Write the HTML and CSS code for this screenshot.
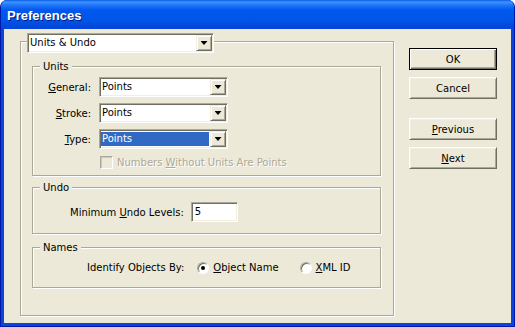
FILE: index.html
```html
<!DOCTYPE html>
<html lang="en">
<head>
    <meta charset="UTF-8">
    <title>Preferences</title>
    <link rel="stylesheet" href="styles.css">
</head>
<body>
    <div class="window">
        <div class="titlebar">
            <span class="title">Preferences</span>
        </div>

        <div class="client">
            <div class="panel">
                <div class="panel-head">
                    <div class="combo wide">
                        <span class="field">Units &amp; Undo</span>
                        <span class="drop"></span>
                    </div>
                </div>

                <div class="group units">
                    <div class="caption">Units</div>

                    <div class="row">
                        <span class="lbl"><u>G</u>eneral:</span>
                        <div class="combo">
                            <span class="field">Points</span>
                            <span class="drop"></span>
                        </div>
                    </div>

                    <div class="row">
                        <span class="lbl"><u>S</u>troke:</span>
                        <div class="combo">
                            <span class="field">Points</span>
                            <span class="drop"></span>
                        </div>
                    </div>

                    <div class="row">
                        <span class="lbl"><u>T</u>ype:</span>
                        <div class="combo">
                            <span class="field selected">Points</span>
                            <span class="drop"></span>
                        </div>
                    </div>

                    <div class="check-row">
                        <span class="checkbox"></span>
                        <span class="disabled">Numbers <u>W</u>ithout Units Are Points</span>
                    </div>
                </div>

                <div class="group undo">
                    <div class="caption">Undo</div>
                    <div class="undo-row">
                        <span>Minimum <u>U</u>ndo Levels:</span>
                        <span class="textbox">5</span>
                    </div>
                </div>

                <div class="group names">
                    <div class="caption">Names</div>
                    <div class="names-row">
                        <span class="names-lbl">Identify Objects By:</span>
                        <span class="radio checked"></span>
                        <span class="radio-text"><u>O</u>bject Name</span>
                        <span class="radio second"></span>
                        <span class="radio-text"><u>X</u>ML ID</span>
                    </div>
                </div>
            </div>

            <div class="buttons">
                <button class="btn default">OK</button>
                <button class="btn">Cancel</button>
                <button class="btn spaced"><u>P</u>revious</button>
                <button class="btn"><u>N</u>ext</button>
            </div>
        </div>
    </div>
</body>
</html>
```

FILE: styles.css
```css
html, body{
    margin: 0;
    padding: 0;
    background: #ffffff;
}

body{
    font-family: "DejaVu Sans", sans-serif;
    font-size: 10px;
    color: #000000;
}

.window{
    width: 515px;
    height: 327px;
    box-sizing: border-box;
    display: flex;
    flex-direction: column;
    background: #0846DA;
    border: 1px solid #0019A8;
    border-top: none;
    border-radius: 7px 7px 0 0;
    overflow: hidden;
}

.titlebar{
    height: 29px;
    flex: none;
    display: flex;
    align-items: center;
    padding: 2px 0 0 6px;
    box-sizing: border-box;
    background: linear-gradient(to bottom, #0A5AE8 0px, #3D95FF 2px, #2277F8 5px, #0058EE 10px, #0055E8 20px, #0049DA 26px, #0843DA 29px);
}

.title{
    font-family: "Liberation Sans", sans-serif;
    font-size: 13px;
    font-weight: bold;
    color: #ffffff;
    text-shadow: 1px 1px 0 #0A1883;
}

.client{
    flex: 1;
    margin: 0 3px 3px 3px;
    background: #ECE9D8;
    display: flex;
    align-items: flex-start;
    padding: 12px 0 0 16px;
}

.panel{
    width: 374px;
    box-sizing: border-box;
    border: 1px solid #ACA899;
    box-shadow: inset 1px 1px 0 #ffffff, 1px 1px 0 #ffffff;
    padding: 0 12px 27px 11px;
}

.panel-head{
    margin: -9px 0 0 -5px;
}

.combo{
    width: 129px;
    height: 20px;
    box-sizing: border-box;
    display: flex;
    border: 1px solid;
    border-color: #ACA899 #ffffff #ffffff #ACA899;
    box-shadow: inset 1px 1px 0 #716F64, inset -1px -1px 0 #F1EFE2;
    padding: 1px;
    background: #ffffff;
}

.combo.wide{
    width: 187px;
}

.field{
    flex: 1;
    line-height: 16px;
    padding-left: 1px;
    white-space: nowrap;
}

.field.selected{
    background: #316AC5;
    color: #ffffff;
    margin: 1px 1px 1px 0;
    line-height: 14px;
}

.drop{
    width: 16px;
    flex: none;
    box-sizing: border-box;
    border: 1px solid;
    border-color: #F1EFE2 #716F64 #716F64 #F1EFE2;
    box-shadow: inset 1px 1px 0 #ffffff, inset -1px -1px 0 #ACA899;
    background: #ECE9D8;
    display: flex;
    align-items: center;
    justify-content: center;
}

.drop::after{
    content: "";
    width: 7px;
    height: 4px;
    background: #000000;
    clip-path: polygon(0 0, 100% 0, 50% 100%);
}

.group{
    border: 1px solid #ACA899;
    box-shadow: inset 1px 1px 0 #ffffff, 1px 1px 0 #ffffff;
}

.caption{
    width: fit-content;
    margin: -7px 0 0 7px;
    padding: 0 3px;
    line-height: 13px;
    background: #ECE9D8;
}

.units{
    margin-top: 13px;
    padding-bottom: 6px;
}

.row{
    display: flex;
    align-items: center;
    margin-top: 6px;
}

.caption + .row{
    margin-top: 4px;
}

.lbl{
    width: 58px;
    text-align: right;
    margin-right: 8px;
}

.check-row{
    display: flex;
    align-items: center;
    margin: 7px 0 0 67px;
}

.checkbox{
    width: 13px;
    height: 13px;
    box-sizing: border-box;
    border: 1px solid;
    border-color: #ACA899 #ffffff #ffffff #ACA899;
    box-shadow: inset 1px 1px 0 #CAC8BB;
    background: #ECE9D8;
    margin-right: 4px;
}

.disabled{
    color: #ACA899;
    text-shadow: 1px 1px 0 #ffffff;
}

.undo{
    margin-top: 11px;
    padding-bottom: 11px;
}

.undo-row{
    display: flex;
    align-items: center;
    gap: 7px;
    margin: 8px 0 0 37px;
}

.textbox{
    width: 47px;
    height: 20px;
    box-sizing: border-box;
    border: 1px solid;
    border-color: #ACA899 #ffffff #ffffff #ACA899;
    box-shadow: inset 1px 1px 0 #716F64, inset -1px -1px 0 #F1EFE2;
    background: #ffffff;
    padding: 0 3px;
    line-height: 18px;
}

.names{
    margin-top: 13px;
    padding-bottom: 13px;
}

.names-row{
    display: flex;
    align-items: center;
    height: 13px;
    margin: 7px 0 0 54px;
}

.names-lbl{
    margin-right: 13px;
}

.radio{
    width: 12px;
    height: 12px;
    box-sizing: border-box;
    border-radius: 50%;
    border: 1px solid;
    border-color: #ACA899 #ffffff #ffffff #ACA899;
    box-shadow: inset 1px 1px 0 #716F64;
    background: #ffffff;
    margin-right: 4px;
    display: flex;
    align-items: center;
    justify-content: center;
}

.radio.checked::after{
    content: "";
    width: 4px;
    height: 4px;
    border-radius: 50%;
    background: #000000;
}

.radio.second{
    margin-left: 21px;
}

.buttons{
    display: flex;
    flex-direction: column;
    gap: 7px;
    margin: 7px 0 0 15px;
}

.btn{
    width: 88px;
    height: 22px;
    box-sizing: border-box;
    font-family: "DejaVu Sans", sans-serif;
    font-size: 10px;
    color: #000000;
    background: #ECE9D8;
    border: 1px solid;
    border-color: #ffffff #716F64 #716F64 #ffffff;
    box-shadow: inset 1px 1px 0 #F1EFE2, inset -1px -1px 0 #ACA899;
    padding: 0;
}

.btn.default{
    border-color: #000000;
    box-shadow: inset 1px 1px 0 #ffffff, inset -1px -1px 0 #716F64, inset -2px -2px 0 #ACA899;
}

.btn.spaced{
    margin-top: 12px;
}
```
